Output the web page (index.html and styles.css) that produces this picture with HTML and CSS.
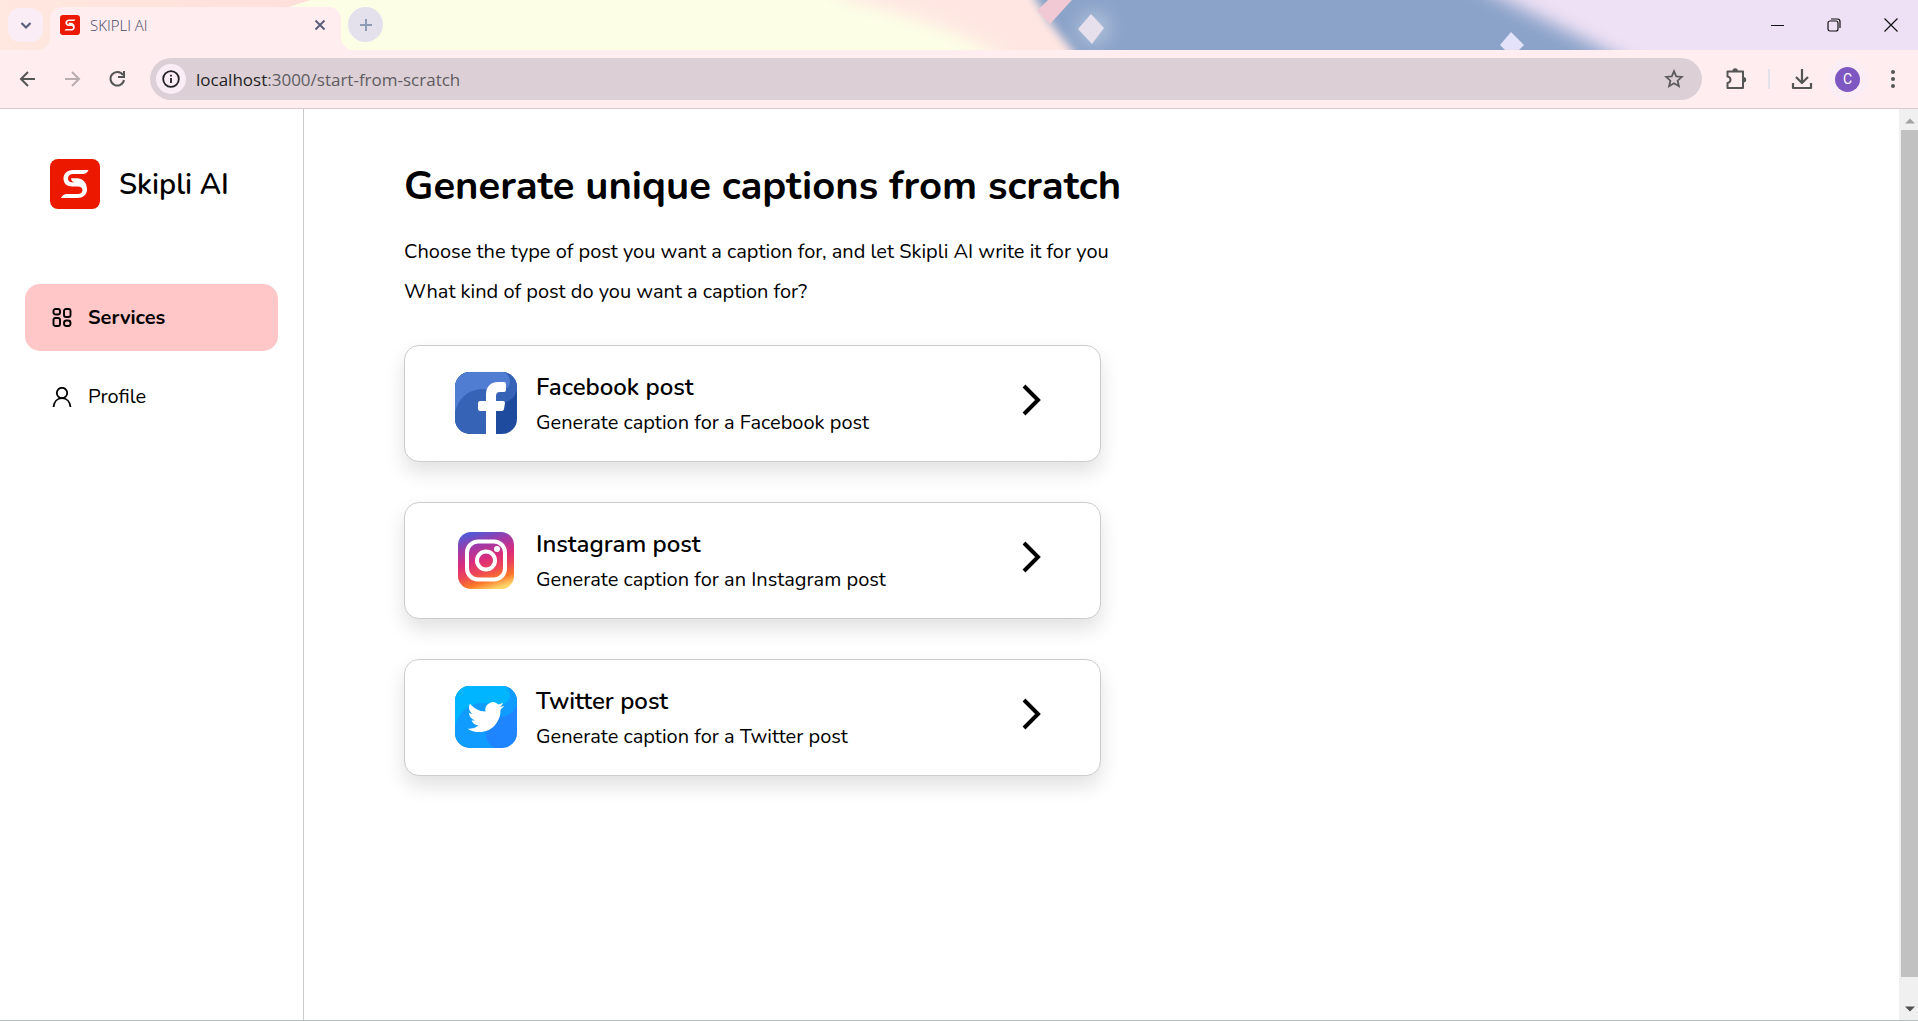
FILE: index.html
```html
<!DOCTYPE html>
<html lang="en">
<head>
<meta charset="utf-8">
<title>SKIPLI AI</title>
<link rel="stylesheet" href="styles.css">
</head>
<body>
<header class="browser">
  <div class="tabstrip">
    <svg class="theme" viewBox="0 0 1918 50" preserveAspectRatio="none" aria-hidden="true">
      <defs>
        <linearGradient id="dawn" x1="0" x2="1"><stop offset="0" stop-color="#ffe8e0"/><stop offset="1" stop-color="#ffdcd8"/></linearGradient>
        <filter id="edge" x="-20%" y="-60%" width="140%" height="220%"><feGaussianBlur stdDeviation="5"/></filter>
        <filter id="soft" x="-20%" y="-60%" width="140%" height="220%"><feGaussianBlur stdDeviation="9"/></filter>
        <filter id="glow" x="-100%" y="-100%" width="300%" height="300%"><feGaussianBlur stdDeviation="8"/></filter>
      </defs>
      <rect width="1918" height="50" fill="#8ba3c9"/>
      <path d="M-40 -40H1012L1036 0L1051 24L1072 50L1096 90H-40Z" fill="#ffe6e2" filter="url(#edge)"/>
      <rect width="400" height="50" fill="url(#dawn)"/>
      <path d="M400 -40H780L850 0Q930 18 990 50L1030 90H400Z" fill="#fcffe6" filter="url(#soft)"/>
      <path d="M311 0Q260 14 200 50H800V0Z" fill="#fcffe6"/>
      <path d="M1048 0H1072L1050 24L1037 11Z" fill="#f0c9d4"/>
      <path d="M1430 -40L1505 0L1585 40L1680 90H2000V-40Z" fill="#efe1f5" filter="url(#soft)"/>
      <circle cx="1094" cy="28" r="18" fill="#bccbe0" opacity=".6" filter="url(#glow)"/>
      <path d="M1091 14L1104 28L1092 44L1078 29Z" fill="#e6e0ec"/>
      <path d="M1511 32L1524 45L1519 50H1505L1500 45Z" fill="#e4e1fa"/>
    </svg>
    <button class="tab-search" aria-label="Search tabs"><svg width="20" height="20" viewBox="0 0 20 20"><path d="M5.500 8L10 12.500L14.500 8" fill="none" stroke="#5c5f7c" stroke-width="2.200"/></svg></button>
    <div class="tab">
      <svg class="favicon" viewBox="0 0 50 50"><use href="#skipli"/></svg>
      <span class="tab-title">SKIPLI AI</span>
      <button class="tab-close" aria-label="Close tab"><svg width="12" height="12" viewBox="0 0 12 12"><path d="M1.500 1.500L10.500 10.500M10.500 1.500L1.500 10.500" stroke="#5c5f7c" stroke-width="2"/></svg></button>
    </div>
    <button class="tab-new" aria-label="New tab"><svg width="14" height="14" viewBox="0 0 14 14"><path d="M7 1V13M1 7H13" stroke="#8f9ab4" stroke-width="2"/></svg></button>
    <div class="window-controls">
      <button aria-label="Minimize"><svg width="14" height="14" viewBox="0 0 14 14"><path d="M1 7.500H14" stroke="#111"/></svg></button>
      <button aria-label="Restore"><svg width="14" height="14" viewBox="0 0 14 14" fill="none" stroke="#111" stroke-width="1.200"><rect x="1" y="3" width="10" height="10" rx="2"/><path d="M4 1H10.500Q13 1 13 3.500V10"/></svg></button>
      <button aria-label="Close"><svg width="14" height="14" viewBox="0 0 14 14"><path d="M.5 .5L13.500 13.500M13.500 .5L.5 13.500" stroke="#111" stroke-width="1.200"/></svg></button>
    </div>
  </div>
  <div class="toolbar">
    <div class="nav-buttons">
      <button aria-label="Back"><svg width="18" height="18" viewBox="0 0 18 18"><path d="M16 9H3M9 2L2 9L9 16" fill="none" stroke="#555" stroke-width="2"/></svg></button>
      <button aria-label="Forward"><svg width="18" height="18" viewBox="0 0 18 18"><path d="M1 9H15M8 2L15 9L8 16" fill="none" stroke="#b9adaf" stroke-width="2"/></svg></button>
      <button aria-label="Reload"><svg width="18" height="18" viewBox="0 0 18 18"><path d="M14 5A6.800 6.800 0 1 0 15 10" fill="none" stroke="#555" stroke-width="2"/><path d="M16 1V8H9V6H14V1Z" fill="#555"/></svg></button>
    </div>
    <div class="address">
      <button class="site-info" aria-label="Site information"><svg width="18" height="18" viewBox="0 0 18 18"><circle cx="9" cy="9" r="7.800" fill="none" stroke="#222" stroke-width="1.800"/><path d="M9 8V13M9 4.800V6.600" stroke="#222" stroke-width="1.800"/></svg></button>
      <div class="url"><span class="host">localhost</span>:3000/start-from-scratch</div>
      <button class="star" aria-label="Bookmark"><svg width="20" height="20" viewBox="0 0 20 20"><path d="M10 2.200L12.200 7.400L17.900 7.900L13.600 11.700L14.900 17.200L10 14.300L5.100 17.200L6.400 11.700L2.100 7.900L7.800 7.400Z" fill="none" stroke="#5d5a5d" stroke-width="1.800"/></svg></button>
    </div>
    <div class="tools">
      <button aria-label="Extensions"><svg width="22" height="22" viewBox="0 0 22 22"><path d="M2.500 3.500H18V20H2.500V15Q5.500 14.500 5.500 11.800Q5.500 9 2.500 8.500Z" fill="none" stroke="#555" stroke-width="2" stroke-linejoin="round"/><path d="M7.500 3A2.700 2.700 0 0 1 12.900 3ZM18.500 9A2.700 2.700 0 0 1 18.500 14.400Z" fill="#555"/></svg></button>
      <span class="divider"></span>
      <button aria-label="Downloads"><svg width="22" height="22" viewBox="0 0 22 22"><path d="M11 1V14M5 9L11 15L17 9M2 15V20H20V15" fill="none" stroke="#555" stroke-width="2.200" stroke-linejoin="round"/></svg></button>
      <button class="avatar" aria-label="Account C">C</button>
      <button class="menu" aria-label="Menu"><svg width="6" height="20" viewBox="0 0 6 20" fill="#555"><circle cx="3" cy="3" r="2"/><circle cx="3" cy="10" r="2"/><circle cx="3" cy="17" r="2"/></svg></button>
    </div>
  </div>
</header>
<div class="viewport">
  <aside class="sidebar">
    <a class="brand" href="#">
      <svg width="50" height="50" viewBox="0 0 50 50" aria-hidden="true">
        <g id="skipli"><rect width="50" height="50" rx="8" fill="#ec1800"/><path d="M38.500 11H23C17 11 13.500 15 13.500 19.500C13.500 24.500 17 27.500 22 27.500H27C30 27.500 32.500 28.500 32.500 31C32.500 33.500 30.500 35 28 35H16Q12.500 35.500 11 39H27C33 39 37 35.500 37 30.500C37 23.500 32.500 19.300 27 19.300H21Q21.200 22.700 24.500 23.300H22C19.500 23 18 21.700 18 19.200C18 16.700 20 15 23 15H33Q37 15 38.500 11Z" fill="#fff"/></g>
      </svg>
      <span>Skipli AI</span>
    </a>
    <nav class="side-nav">
      <a class="side-link active" href="#"><svg width="20" height="20" viewBox="0 0 20 20" fill="none" stroke="#000" stroke-width="1.900"><rect x="1.500" y="1" width="6.500" height="5.500" rx="2"/><rect x="12" y="1" width="6.500" height="8" rx="2"/><rect x="1.500" y="10" width="6.500" height="8" rx="2"/><rect x="12" y="12.500" width="6.500" height="5.500" rx="2.500"/></svg>Services</a>
      <a class="side-link" href="#"><svg width="20" height="20" viewBox="0 0 20 20" fill="none" stroke="#000" stroke-width="1.800"><circle cx="10" cy="6" r="5.200"/><path d="M1.500 20C2 14.500 5.500 11.200 10 11.200S18 14.500 18.500 20"/></svg>Profile</a>
    </nav>
  </aside>
  <main class="content">
    <h1>Generate unique captions from scratch</h1>
    <p>Choose the type of post you want a caption for, and let Skipli AI write it for you</p>
    <p>What kind of post do you want a caption for?</p>
    <div class="cards">
      <a class="card" href="#">
        <svg class="logo" viewBox="0 0 62 62" aria-hidden="true">
          <defs><clipPath id="tile"><rect width="62" height="62" rx="15"/></clipPath></defs>
          <g clip-path="url(#tile)"><rect width="62" height="62" fill="#1f4b9f"/><path d="M0 0H62V18Q58 31 44 31Q30 36 31 50Q32 58 40 62H0Z" fill="#3763b7"/><path d="M0 40V0H50Q57 7 54 14Q50 20 40 19Q32 17 25 17Q5 20 0 40Z" fill="#507dd2"/>
          <path d="M31 62V39H25Q23 39 23 37V31Q23 29 25 29H31V23C31 14 36 10 43 10H49Q51 10 51 12V18Q51 20 49 20H45Q41 20 41 24V29H48Q50 29 50 31L49 37Q48.500 39 47 39H41V62Z" fill="#fff"/></g>
        </svg>
        <div class="card-text"><h2>Facebook post</h2><span>Generate caption for a Facebook post</span></div>
        <svg class="chevron" width="20" height="32" viewBox="0 0 20 32"><path d="M2 2L16 16L2 30" fill="none" stroke="#000" stroke-width="4"/></svg>
      </a>
      <a class="card" href="#">
        <svg class="logo" viewBox="0 0 62 62" aria-hidden="true">
          <defs><linearGradient id="insta" x1=".35" y1="0" x2=".65" y2="1"><stop offset="0" stop-color="#5558d2"/><stop offset=".22" stop-color="#a03aa8"/><stop offset=".47" stop-color="#db2c7c"/><stop offset=".66" stop-color="#ec4658"/><stop offset=".84" stop-color="#fb7628"/><stop offset="1" stop-color="#ffd568"/></linearGradient></defs>
          <rect x="3" y="3" width="56" height="57" rx="13" fill="url(#insta)"/><g fill="none" stroke="#fff" stroke-width="4"><rect x="12" y="12.500" width="38" height="38" rx="11"/><circle cx="31" cy="31.500" r="9"/></g><circle cx="42" cy="20" r="3" fill="#fff"/>
        </svg>
        <div class="card-text"><h2>Instagram post</h2><span>Generate caption for an Instagram post</span></div>
        <svg class="chevron" width="20" height="32" viewBox="0 0 20 32"><path d="M2 2L16 16L2 30" fill="none" stroke="#000" stroke-width="4"/></svg>
      </a>
      <a class="card" href="#">
        <svg class="logo" viewBox="0 0 62 62" aria-hidden="true">
          <g clip-path="url(#tile)"><rect width="62" height="62" fill="#1f85ff"/><path d="M0 0H62V18Q58 31 44 31Q30 36 31 50Q32 58 40 62H0Z" fill="#109cff"/><path d="M0 40V0H50Q57 7 54 14Q50 20 40 19Q32 17 25 17Q5 20 0 40Z" fill="#00b5ff"/>
          <path transform="translate(12.500 12.800) scale(1.530)" d="M23.950 4.570a10 10 0 0 1-2.820.77 4.960 4.960 0 0 0 2.160-2.720c-.95.550-2 .95-3.120 1.180a4.920 4.920 0 0 0-8.380 4.480C7.690 8.090 4.070 6.130 1.640 3.160a4.820 4.820 0 0 0-.67 2.480c0 1.710.87 3.210 2.190 4.100a4.900 4.900 0 0 1-2.230-.62v.06a4.920 4.920 0 0 0 3.950 4.830 5 5 0 0 1-2.210.09 4.940 4.940 0 0 0 4.600 3.420A9.870 9.870 0 0 1 0 19.540a13.990 13.990 0 0 0 7.560 2.210c9.050 0 14-7.500 14-13.980 0-.21 0-.42-.02-.63.960-.69 1.800-1.560 2.460-2.550z" fill="#fff"/></g>
        </svg>
        <div class="card-text"><h2>Twitter post</h2><span>Generate caption for a Twitter post</span></div>
        <svg class="chevron" width="20" height="32" viewBox="0 0 20 32"><path d="M2 2L16 16L2 30" fill="none" stroke="#000" stroke-width="4"/></svg>
      </a>
    </div>
  </main>
  <div class="scrollbar" aria-hidden="true">
    <svg width="10" height="6" viewBox="0 0 10 6"><path d="M0 5.500L5 .5L10 5.500Z" fill="#a3a3a3"/></svg>
    <div class="thumb"></div>
    <svg width="10" height="6" viewBox="0 0 10 6"><path d="M0 .5L5 5.500L10 .5Z" fill="#505050"/></svg>
  </div>
</div>
</body>
</html>
```
FILE: styles.css
```css
* { box-sizing: border-box; }

body {
  margin: 0;
  min-height: 100vh;
  display: flex;
  flex-direction: column;
  font-family: Nunito, "Open Sans", sans-serif;
  color: #000;
  background: #fff;
}

button {
  display: flex;
  align-items: center;
  justify-content: center;
  padding: 0;
  border: 0;
  background: none;
  font: inherit;
}

a { color: inherit; text-decoration: none; }
svg { display: block; flex: none; }

/* Browser frame */
.browser { font-family: "Segoe UI", "Open Sans", sans-serif; }

.tabstrip {
  position: relative;
  display: flex;
  align-items: flex-end;
  height: 50px;
  padding-left: 8px;
}

.theme {
  position: absolute;
  inset: 0;
  width: 100%;
  height: 100%;
}

.tabstrip > :not(.theme) { position: relative; }

.tab-search {
  width: 35px;
  height: 34px;
  margin-bottom: 8px;
  border-radius: 12px;
  background: #fbedf5;
}

.tab {
  display: flex;
  align-items: center;
  width: 291px;
  height: 43px;
  margin-left: 7px;
  padding: 0 15px 7px 10px;
  border-radius: 12px 12px 0 0;
  background: #ffedef;
}

.tab::before,
.tab::after {
  content: "";
  position: absolute;
  bottom: 0;
  width: 12px;
  height: 12px;
}

.tab::before { left: -12px; background: radial-gradient(circle at 0 0, transparent 12px, #ffedef 12px); }
.tab::after { right: -12px; background: radial-gradient(circle at 100% 0, transparent 12px, #ffedef 12px); }

.favicon { width: 20px; height: 20px; }
.tab-title { flex: 1; margin-left: 10px; font-size: 15px; font-weight: 300; color: #45465f; }

.tab-new {
  width: 35px;
  height: 35px;
  margin: 0 0 8px 7px;
  border-radius: 50%;
  background: #e4e1ed;
}

.window-controls {
  display: flex;
  gap: 43px;
  margin: 0 20px 18px auto;
}

.toolbar {
  display: flex;
  align-items: center;
  gap: 23px;
  height: 59px;
  padding: 0 22px 0 19px;
  background: #ffedef;
  border-bottom: 1px solid #d9c9cf;
}

.nav-buttons { display: flex; gap: 27px; }

.address {
  flex: 1;
  display: flex;
  align-items: center;
  height: 42px;
  padding: 0 18px 0 6px;
  border-radius: 21px;
  background: #dcd0d6;
}

.site-info {
  width: 30px;
  height: 30px;
  border-radius: 50%;
  background: #fbedf5;
}

.url { flex: 1; margin-left: 10px; font-size: 17px; color: #5f5b60; }
.host { color: #1f1f1f; }

.tools { display: flex; align-items: center; }
.divider { width: 2px; height: 20px; margin: 0 21px; background: #e4e1ed; }

.avatar {
  width: 25px;
  height: 25px;
  margin: 0 30px 0 22px;
  border-radius: 50%;
  background: #7e57c2;
  box-shadow: 0 0 0 8px #fbedf5;
  color: #fff;
  font: 14px Roboto, sans-serif;
}

/* Page */
.viewport {
  flex: 1;
  display: flex;
  border-bottom: 1px solid #b5c0c2;
}

.sidebar {
  width: 304px;
  padding: 50px 25px 0;
  border-right: 1px solid #ccc;
}

.brand {
  display: flex;
  align-items: flex-start;
  gap: 19px;
  padding-left: 25px;
  font-size: 29px;
  font-weight: 600;
  line-height: 52px;
}

.side-nav {
  display: flex;
  flex-direction: column;
  gap: 12px;
  margin-top: 73px;
}

.side-link {
  display: flex;
  align-items: center;
  gap: 16px;
  height: 67px;
  padding-left: 27px;
  border-radius: 15px;
  font-size: 20px;
}

.side-link.active { background: #ffc7c7; font-weight: 700; }

.content { flex: 1; padding: 50px 100px; }

h1 {
  margin: 0 0 19px;
  font-size: 40px;
  font-weight: 700;
  line-height: 54px;
}

p { margin: 0; font-size: 20px; line-height: 40px; }

.cards {
  display: flex;
  flex-direction: column;
  gap: 40px;
  max-width: 697px;
  margin-top: 33px;
}

.card {
  display: flex;
  align-items: center;
  height: 117px;
  padding: 0 58px 1px 50px;
  border: 1px solid #ccc;
  border-radius: 15px;
  background: #fff;
  box-shadow: 0 10px 20px rgba(0, 0, 0, .12);
}

.logo { width: 62px; height: 62px; }
.card-text { flex: 1; margin: 4px 0 0 19px; }
h2 { margin: 0; font-size: 24px; font-weight: 600; line-height: 35px; }
.card-text span { display: block; font-size: 20px; line-height: 35px; }
.chevron { margin-bottom: 7px; }

.scrollbar {
  display: flex;
  flex-direction: column;
  align-items: center;
  gap: 6px;
  width: 19px;
  padding: 9px 0 8px 2px;
  background: #f0f0f0;
}

.thumb { flex: 1; width: 100%; margin-bottom: 23px; background: #c1c1c1; }
```
